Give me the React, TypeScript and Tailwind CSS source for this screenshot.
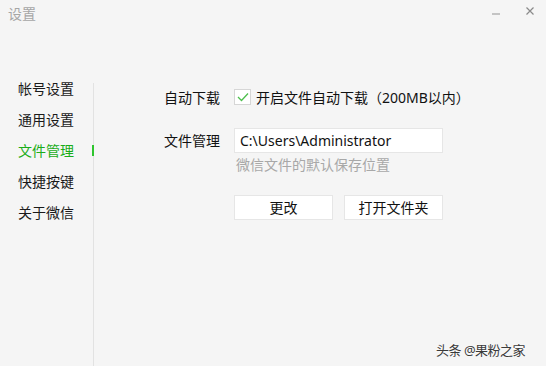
const navItems = ["帐号设置", "通用设置", "文件管理", "快捷按键", "关于微信"];

function TitleBar() {
  return (
    <div className="flex h-[27px] items-center justify-between pl-[8px] pr-[12px]">
      <span className="text-[14px] leading-[18px] text-[#a6a6a6]">设置</span>
      <div className="flex items-center gap-[26px]">
        <span className="block h-[2px] w-[8px] bg-[#c4c4c4]" />
        <svg width="8" height="8" viewBox="0 0 8 8" className="mt-[-6px]">
          <path d="M0.5 0.5 L7.5 7.5 M7.5 0.5 L0.5 7.5" stroke="#8a8a8a" strokeWidth="1.2" />
        </svg>
      </div>
    </div>
  );
}

function Sidebar({ active }: { active: string }) {
  return (
    <nav className="w-[94px] shrink-0 border-r border-[#e2e2e2]">
      <ul className="-mt-[10px]">
        {navItems.map((item) => (
          <li
            key={item}
            className={`relative flex h-[31px] items-center pl-[18px] text-[14px] ${
              item === active ? "text-[#1aad19]" : "text-[#1a1a1a]"
            }`}
          >
            {item}
            {item === active && <span className="absolute right-[-1px] top-[10px] h-[11px] w-[2px] bg-[#2ec52e]" />}
          </li>
        ))}
      </ul>
    </nav>
  );
}

function Checkbox() {
  return (
    <span className="flex h-[16px] w-[17px] items-center justify-center border border-[#d6d6d6] bg-white">
      <svg width="12" height="10" viewBox="0 0 12 10">
        <path d="M1 5 L4.5 8.5 L11 1.5" fill="none" stroke="#4cbf4c" strokeWidth="1.3" />
      </svg>
    </span>
  );
}

function FileSettings() {
  return (
    <main className="pl-[70px] pt-[6px] text-[14px] text-[#111]">
      <div className="flex h-[16px] items-center">
        <span className="w-[70px]">自动下载</span>
        <Checkbox />
        <span className="ml-[5px]">开启文件自动下载（200MB以内）</span>
      </div>

      <div className="mt-[23px] flex items-center">
        <span className="w-[70px]">文件管理</span>
        <div className="flex h-[25px] w-[209px] items-center border border-[#e6e6e6] bg-white pl-[5px] text-[14px]">
          C:\Users\Administrator
        </div>
      </div>
      <p className="ml-[72px] mt-[3px] leading-[18px] text-[#a8a8a8]">微信文件的默认保存位置</p>

      <div className="ml-[70px] mt-[21px] flex gap-[11px]">
        <button className="h-[25px] w-[99px] border border-[#e6e6e6] bg-white text-[14px] text-[#111]">更改</button>
        <button className="h-[25px] w-[99px] border border-[#e6e6e6] bg-white text-[14px] text-[#111]">打开文件夹</button>
      </div>
    </main>
  );
}

export default function App() {
  return (
    <div
      className="relative flex h-[366px] w-[546px] flex-col overflow-hidden bg-[#f5f5f5]"
      style={{ fontFamily: '"Noto Sans", "Noto Sans CJK SC", sans-serif' }}
    >
      <TitleBar />
      <div className="mt-[56px] flex flex-1">
        <Sidebar active="文件管理" />
        <FileSettings />
      </div>
      <span className="absolute left-[436px] top-[342px] text-[13px] leading-[16px] tracking-[-0.5px] text-[#3a3a3a] [text-shadow:0_0_2px_#fff]">
        头条 @果粉之家
      </span>
    </div>
  );
}
